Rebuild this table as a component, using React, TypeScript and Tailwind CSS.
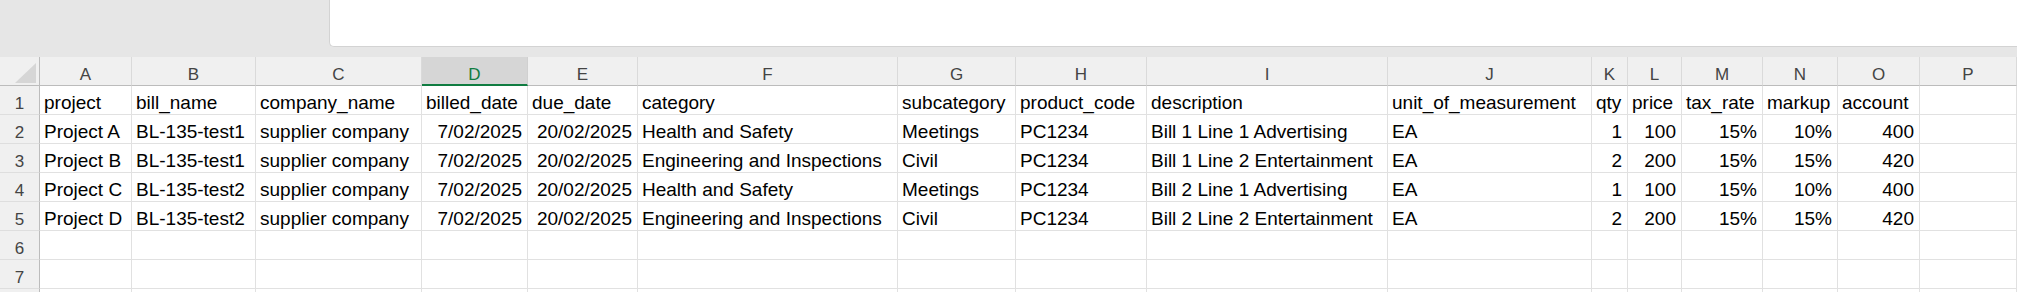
import React from "react";

const COLS = ["A", "B", "C", "D", "E", "F", "G", "H", "I", "J", "K", "L", "M", "N", "O", "P"];

// which columns are right-aligned for the data rows (dates + numbers)
const RIGHT = [false, false, false, true, true, false, false, false, false, false, true, true, true, true, true, false];

const HEADER = [
    "project", "bill_name", "company_name", "billed_date", "due_date", "category", "subcategory",
    "product_code", "description", "unit_of_measurement", "qty", "price", "tax_rate", "markup", "account", "",
];

const ROWS: string[][] = [
    ["Project A", "BL-135-test1", "supplier company", "7/02/2025", "20/02/2025", "Health and Safety", "Meetings", "PC1234", "Bill 1 Line 1 Advertising", "EA", "1", "100", "15%", "10%", "400", ""],
    ["Project B", "BL-135-test1", "supplier company", "7/02/2025", "20/02/2025", "Engineering and Inspections", "Civil", "PC1234", "Bill 1 Line 2 Entertainment", "EA", "2", "200", "15%", "15%", "420", ""],
    ["Project C", "BL-135-test2", "supplier company", "7/02/2025", "20/02/2025", "Health and Safety", "Meetings", "PC1234", "Bill 2 Line 1 Advertising", "EA", "1", "100", "15%", "10%", "400", ""],
    ["Project D", "BL-135-test2", "supplier company", "7/02/2025", "20/02/2025", "Engineering and Inspections", "Civil", "PC1234", "Bill 2 Line 2 Entertainment", "EA", "2", "200", "15%", "15%", "420", ""],
];

const EMPTY = COLS.map(() => "");

function RowNum({ n }: { n?: number }) {
    return (
        <div className="h-[29px] bg-[#f0f0f0] border-r border-b border-r-[#bcbcbc] border-b-[#dedede] text-center text-[17px] leading-[25px] pt-[5px] text-[#444444]">
            {n}
        </div>
    );
}

function Cell({ value, right }: { value: string; right?: boolean }) {
    return (
        <div
            className={`h-[29px] border-r border-b border-[#e1e1e1] whitespace-nowrap overflow-hidden text-[19px] leading-[25px] pt-[4px] text-black ${
                right ? "text-right pr-[5px]" : "pl-[4px]"
            }`}
        >
            {value}
        </div>
    );
}

export default function App() {
    // last row only peeks in at the bottom edge, so no number is drawn for it
    const rows = [HEADER, ...ROWS, EMPTY, EMPTY, EMPTY];

    return (
        <div className="h-[292px] w-[2017px] overflow-hidden bg-white font-['Liberation_Sans',Arial,sans-serif]">

            {/* ── TOP BAR (formula area) ── */}
            <div className="h-[57px] bg-[#e6e6e6]">
                <div className="ml-[329px] h-[47px] bg-white border-l border-b border-[#d3d3d3] rounded-bl-[5px]" />
            </div>

            {/* ── GRID ── */}
            <div className="grid grid-cols-[40px_92px_124px_166px_106px_110px_260px_118px_131px_241px_204px_36px_54px_81px_75px_82px_97px]">

                {/* column letters */}
                <div className="relative h-[29px] bg-[#f0f0f0] border-r border-b border-[#bcbcbc]">
                    <svg className="absolute left-[15px] top-[6px]" width="21" height="20" viewBox="0 0 21 20">
                        <polygon points="0,20 21,20 21,0" fill="#d6d6d6" />
                    </svg>
                </div>
                {COLS.map((c) =>
                    c === "D" ? (
                        <div
                            key={c}
                            className="h-[29px] bg-[#d6d6d6] border-r border-r-[#d0d0d0] border-b-2 border-b-[#107c41] text-center text-[17px] leading-[23px] pt-[6px] text-[#107c41]"
                        >
                            {c}
                        </div>
                    ) : (
                        <div
                            key={c}
                            className="h-[29px] bg-[#f0f0f0] border-r border-b border-r-[#dadada] border-b-[#bcbcbc] text-center text-[17px] leading-[23px] pt-[6px] text-[#444444]"
                        >
                            {c}
                        </div>
                    )
                )}

                {/* data rows */}
                {rows.map((row, r) => (
                    <React.Fragment key={r}>
                        <RowNum n={r < rows.length - 1 ? r + 1 : undefined} />
                        {row.map((v, c) => (
                            <Cell key={c} value={v} right={r > 0 && RIGHT[c]} />
                        ))}
                    </React.Fragment>
                ))}
            </div>
        </div>
    );
}
